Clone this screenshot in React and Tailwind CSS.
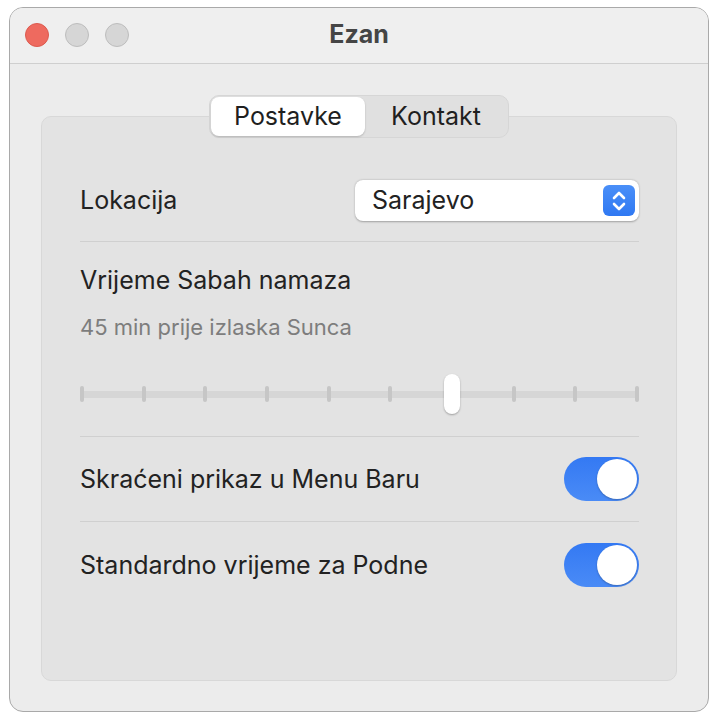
import React, { useState } from 'react';

const font = { fontFamily: 'Inter, "Noto Sans", sans-serif' };

const Toggle = ({ on, onChange }) => (
  <button
    onClick={onChange}
    className={`w-[75px] h-[44px] rounded-full p-[2px] flex items-center ${
      on ? 'bg-gradient-to-b from-[#3479f3] to-[#4a8bf6] justify-end' : 'bg-[#d9d9d9] justify-start'
    }`}
  >
    <span className="w-[40px] h-[40px] rounded-full bg-white shadow-[0_1px_2px_rgba(0,0,0,0.25)]" />
  </button>
);

const Divider = ({ className = '' }) => <div className={`h-px bg-[#d0d0d0] ${className}`} />;

const Slider = ({ value }) => {
  const ticks = Array.from({ length: 10 }, (_, i) => i);
  return (
    <div className="relative h-[40px] flex items-center">
      <div className="absolute inset-x-0 h-[7px] bg-[#d6d6d6] rounded-full" />
      <div className="relative w-full flex justify-between items-center">
        {ticks.map((i) =>
          i === value ? (
            <span
              key={i}
              className="w-[16px] h-[40px] -mx-[6px] rounded-full bg-white shadow-[0_1px_2px_rgba(0,0,0,0.3)]"
            />
          ) : (
            <span key={i} className="w-[4px] h-[16px] rounded-full bg-[#c6c6c6]" />
          )
        )}
      </div>
    </div>
  );
};

export default function App() {
  const [tab, setTab] = useState('postavke');
  const [shortMenu, setShortMenu] = useState(true);
  const [standardNoon, setStandardNoon] = useState(true);

  return (
    <div className="w-[719px] h-[719px] bg-white pt-[7px] pl-[9px]" style={font}>
      <div className="w-[700px] h-[705px] rounded-[14px] bg-[#ececec] border border-[#a9a9a9] overflow-hidden flex flex-col">
        {/* Title bar */}
        <div className="relative h-[56px] bg-[#efefef] border-b border-[#cfcfcf] flex items-center justify-center shrink-0">
          <div className="absolute left-[15px] top-[15px] flex gap-[16px]">
            <span className="w-[24px] h-[24px] rounded-full bg-[#ee6a5f] border border-[#dc5a4f]" />
            <span className="w-[24px] h-[24px] rounded-full bg-[#d6d6d6] border border-[#bdbdbd]" />
            <span className="w-[24px] h-[24px] rounded-full bg-[#d6d6d6] border border-[#bdbdbd]" />
          </div>
          <span className="text-[25px] font-bold text-[#454545] leading-none -mt-[2px]">Ezan</span>
        </div>

        {/* Content */}
        <div className="flex-1 px-[31px] pt-[31px]">
          {/* Tabs */}
          <div className="relative z-10 flex justify-center -mb-[22px]">
            <div className="w-[300px] h-[43px] rounded-[10px] bg-[#e0e0e0] border border-[#d6d6d6] p-[1px] flex">
              <button
                onClick={() => setTab('postavke')}
                className={`w-[154px] h-full rounded-[8px] text-[25px] text-[#1f1f1f] leading-none ${
                  tab === 'postavke' ? 'bg-white shadow-[0_1px_2px_rgba(0,0,0,0.2)]' : ''
                }`}
              >
                Postavke
              </button>
              <button
                onClick={() => setTab('kontakt')}
                className={`flex-1 h-full rounded-[8px] text-[25px] text-[#1f1f1f] leading-none ${
                  tab === 'kontakt' ? 'bg-white shadow-[0_1px_2px_rgba(0,0,0,0.2)]' : ''
                }`}
              >
                Kontakt
              </button>
            </div>
          </div>

          {/* Panel */}
          <div className="h-[565px] rounded-[10px] bg-[#e3e3e3] border border-[#d8d8d8] pl-[38px] pr-[37px] pt-[63px] text-[#222222]">
            <div className="h-[41px] flex items-center justify-between">
              <span className="text-[25px] leading-none">Lokacija</span>
              <div className="w-[284px] h-[41px] rounded-[8px] bg-white shadow-[0_0.5px_2px_rgba(0,0,0,0.3)] flex items-center justify-between pl-[17px] pr-[4px]">
                <span className="text-[25px] leading-none">Sarajevo</span>
                <span className="w-[32px] h-[31px] rounded-[6px] bg-gradient-to-b from-[#4a8ff8] to-[#2f78f2] flex items-center justify-center">
                  <svg width="16" height="24" viewBox="0 0 16 24" fill="none" stroke="white" strokeWidth="2.6" strokeLinecap="round" strokeLinejoin="round">
                    <path d="M3 9 L8 4 L13 9" />
                    <path d="M3 15 L8 20 L13 15" />
                  </svg>
                </span>
              </div>
            </div>

            <Divider className="mt-[20px]" />

            <div className="mt-[23px] text-[25px] leading-[30px]">Vrijeme Sabah namaza</div>
            <div className="mt-[19px] text-[22px] leading-[26px] text-[#7d7d7d]">45 min prije izlaska Sunca</div>

            <div className="mt-[34px]">
              <Slider value={6} />
            </div>

            <Divider className="mt-[22px]" />

            <div className="mt-[20px] h-[44px] flex items-center justify-between">
              <span className="text-[25px] leading-none">Skraćeni prikaz u Menu Baru</span>
              <Toggle on={shortMenu} onChange={() => setShortMenu(!shortMenu)} />
            </div>

            <Divider className="mt-[20px]" />

            <div className="mt-[21px] h-[44px] flex items-center justify-between">
              <span className="text-[25px] leading-none">Standardno vrijeme za Podne</span>
              <Toggle on={standardNoon} onChange={() => setStandardNoon(!standardNoon)} />
            </div>
          </div>
        </div>
      </div>
    </div>
  );
}
